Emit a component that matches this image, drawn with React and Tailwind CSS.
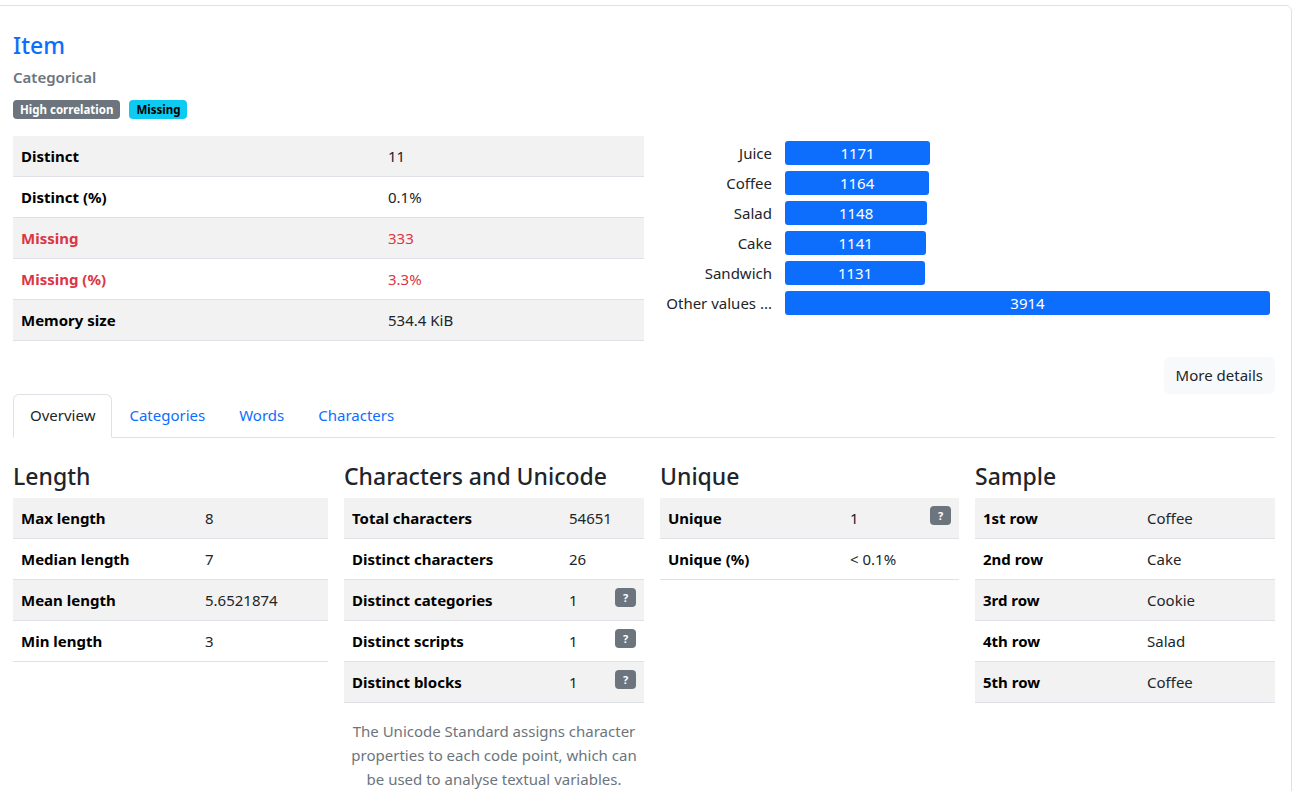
import React from 'react';

const summary = [
  { label: 'Distinct', value: '11' },
  { label: 'Distinct (%)', value: '0.1%' },
  { label: 'Missing', value: '333', alert: true },
  { label: 'Missing (%)', value: '3.3%', alert: true },
  { label: 'Memory size', value: '534.4 KiB' },
];

const freq = [
  { label: 'Juice', count: 1171 },
  { label: 'Coffee', count: 1164 },
  { label: 'Salad', count: 1148 },
  { label: 'Cake', count: 1141 },
  { label: 'Sandwich', count: 1131 },
  { label: 'Other values ...', count: 3914 },
];

const maxCount = 3914;

const lengthRows = [
  ['Max length', '8'],
  ['Median length', '7'],
  ['Mean length', '5.6521874'],
  ['Min length', '3'],
];

const charRows = [
  ['Total characters', '54651', false],
  ['Distinct characters', '26', false],
  ['Distinct categories', '1', true],
  ['Distinct scripts', '1', true],
  ['Distinct blocks', '1', true],
];

const uniqueRows = [
  ['Unique', '1', true],
  ['Unique (%)', '< 0.1%', false],
];

const sampleRows = [
  ['1st row', 'Coffee'],
  ['2nd row', 'Cake'],
  ['3rd row', 'Cookie'],
  ['4th row', 'Salad'],
  ['5th row', 'Coffee'],
];

const HelpBadge = () => (
  <span className="mt-[8px] mr-[8px] flex h-[19px] w-[21px] shrink-0 items-center justify-center rounded-[4px] bg-[#6c757d] text-[11px] font-bold leading-none text-white">
    ?
  </span>
);

// one striped table row: label | value | optional help badge
const StatRow = ({ label, value, labelW, help, index }) => (
  <div
    className={`flex h-[41px] border-b border-[#dee2e6] ${index % 2 === 0 ? 'bg-[#f2f2f2]' : 'bg-white'}`}
  >
    <div className={`${labelW} shrink-0 px-2 leading-[40px] font-bold text-black`}>{label}</div>
    <div className="flex-1 px-2 leading-[40px] text-[#212529]">{value}</div>
    {help && <HelpBadge />}
  </div>
);

const Section = ({ title, children }) => (
  <div>
    <h4 className="mt-[24px] mb-[7px] text-[23px] font-medium leading-[29px] text-[#212529]">{title}</h4>
    {children}
  </div>
);

export default function App() {
  return (
    <div className="min-h-screen bg-white font-['Noto_Sans',sans-serif] text-[15px] text-[#212529]">
      <div className="ml-[-4px] mt-[5px] w-[1296px] rounded-[6px] border border-[#dee2e6] px-4 pt-[25px] pb-6">
        <h4 className="text-[23px] font-medium leading-[29px] text-[#0d6efd]">Item</h4>
        <p className="mt-[6px] text-[15px] font-semibold leading-[22px] text-[#6c757d]">Categorical</p>
        <div className="mt-[12px] flex gap-[9px]">
          <span className="h-[19px] rounded-[4px] bg-[#6c757d] px-[7px] text-[11.5px] font-bold leading-[19px] text-white">
            High correlation
          </span>
          <span className="h-[19px] rounded-[4px] bg-[#0dcaf0] px-[7px] text-[11.5px] font-bold leading-[19px] text-black">
            Missing
          </span>
        </div>

        <div className="mt-[17px] flex gap-4">
          <div className="w-[631px] shrink-0">
            {summary.map((row, i) => (
              <div
                key={row.label}
                className={`flex h-[41px] border-b border-[#dee2e6] ${i % 2 === 0 ? 'bg-[#f2f2f2]' : 'bg-white'}`}
              >
                <div className={`w-[367px] shrink-0 px-2 leading-[40px] font-bold ${row.alert ? 'text-[#dc3545]' : 'text-black'}`}>
                  {row.label}
                </div>
                <div className={`flex-1 px-2 leading-[40px] ${row.alert ? 'text-[#dc3545]' : 'text-[#212529]'}`}>
                  {row.value}
                </div>
              </div>
            ))}
          </div>

          <div className="flex-1 pt-[2px]">
            {freq.map((f) => (
              <div key={f.label} className="flex h-[30px] items-center">
                <div className="w-[112px] shrink-0 text-right text-[15px] text-[#212529]">{f.label}</div>
                <div className="ml-[13px] flex-1">
                  <div
                    className="flex h-[24px] items-center justify-center rounded-[3px] bg-[#0d6efd] text-[15px] text-white"
                    style={{ width: `${(f.count / maxCount) * 485}px` }}
                  >
                    {f.count}
                  </div>
                </div>
              </div>
            ))}
          </div>
        </div>

        <div className="mt-4 flex justify-end">
          <button className="h-[37px] rounded-[6px] bg-[#f8f9fa] px-3 text-[15px] text-[#212529]">More details</button>
        </div>

        <div className="flex border-b border-[#dee2e6]">
          <div className="mb-[-1px] rounded-t-[6px] border border-b-white border-[#dee2e6] bg-white px-4 leading-[41px] text-[#212529]">
            Overview
          </div>
          {['Categories', 'Words', 'Characters'].map((t) => (
            <div key={t} className="border border-transparent px-4 leading-[41px] text-[#0d6efd]">
              {t}
            </div>
          ))}
        </div>

        <div className="grid grid-cols-[315px_300px_299px_300px] gap-x-4">
          <Section title="Length">
            {lengthRows.map(([l, v], i) => (
              <StatRow key={l} label={l} value={v} labelW="w-[184px]" index={i} />
            ))}
          </Section>

          <Section title="Characters and Unicode">
            {charRows.map(([l, v, h], i) => (
              <StatRow key={l} label={l} value={v} help={h} labelW="w-[217px]" index={i} />
            ))}
            <p className="mt-[16px] text-center text-[15px] leading-[24px] text-[#6c757d]">
              The Unicode Standard assigns character properties to each code point, which can be used to analyse
              textual variables.
            </p>
          </Section>

          <Section title="Unique">
            {uniqueRows.map(([l, v, h], i) => (
              <StatRow key={l} label={l} value={v} help={h} labelW="w-[182px]" index={i} />
            ))}
          </Section>

          <Section title="Sample">
            {sampleRows.map(([l, v], i) => (
              <StatRow key={l} label={l} value={v} labelW="w-[164px]" index={i} />
            ))}
          </Section>
        </div>
      </div>
    </div>
  );
}
